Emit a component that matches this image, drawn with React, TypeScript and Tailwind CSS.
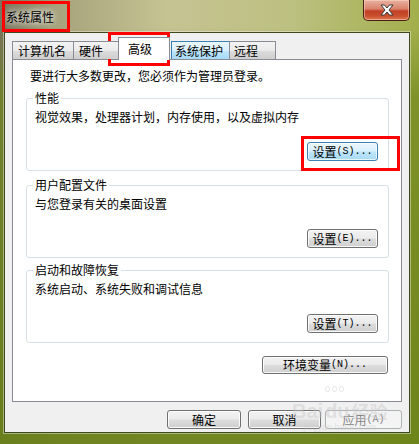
import React from "react";

const btnNormal =
  "flex items-center justify-center rounded-[3px] border border-[#707070] bg-[linear-gradient(180deg,#f2f2f2_0%,#ebebeb_48%,#dddddd_52%,#cfcfcf_100%)] shadow-[inset_0_0_0_1px_rgba(255,255,255,0.85)] text-black";

function Mono({ children }: { children: React.ReactNode }) {
  return <span className="[font-family:'Liberation_Mono',monospace] text-[10px]">{children}</span>;
}

function Group({
  title,
  desc,
  btn,
  className,
}: {
  title: string;
  desc: string;
  btn: React.ReactNode;
  className: string;
}) {
  return (
    <div
      className={
        "relative h-[73px] rounded-[3px] border border-[#d5dfe5] flex flex-col pl-[8px] pr-[10px] pt-[11px] pb-[9px] " +
        className
      }
    >
      <span className="absolute -top-[8px] left-[6px] bg-white px-[2px] leading-[14px]">{title}</span>
      <div className="leading-[14px]">{desc}</div>
      <div className="mt-auto self-end">{btn}</div>
    </div>
  );
}

export default function App() {
  return (
    <div className="relative w-[419px] h-[444px] overflow-hidden flex flex-col [font-family:'Noto_Sans_CJK_SC',sans-serif] text-[12px] leading-[14px] text-black bg-[linear-gradient(180deg,rgba(0,0,0,0)_0%,rgba(0,0,0,0)_6%,rgba(110,134,26,0.7)_22%,rgba(104,128,22,0.9)_100%),linear-gradient(90deg,#77725a_0%,#a7a37c_14%,#c6c393_40%,#bcc080_70%,#a3af4c_100%)]">
      {/* title bar */}
      <div className="h-[32px] flex items-start justify-between shrink-0">
        <div className="pl-[6px] pt-[10px] [text-shadow:0_0_6px_#fff,0_0_10px_rgba(255,255,255,0.9)]">系统属性</div>
        <div className="mr-[9px] w-[47px] h-[21px] rounded-b-[5px] border border-t-0 border-[#4a1e14] bg-[linear-gradient(180deg,#e8b2a2_0%,#d9826a_45%,#c23f25_55%,#c8502f_80%,#e07a52_100%)] shadow-[inset_0_0_0_1px_rgba(255,220,200,0.5)] flex items-center justify-center">
          <svg width="16" height="12" viewBox="0 0 16 12">
            <path d="M2 1 L5.5 1 L8 4 L10.5 1 L14 1 L10 6 L14 11 L10.5 11 L8 8 L5.5 11 L2 11 L6 6 Z" fill="#ffffff" stroke="#3a3a3a" strokeWidth="1" strokeLinejoin="round" />
          </svg>
        </div>
      </div>

      {/* client area */}
      <div className="ml-[4px] mr-[9px] mb-[11px] flex-1 bg-[#f0f0f0] border border-[#3e4a1e] shadow-[0_0_0_1px_rgba(255,255,255,0.4)] flex flex-col px-[7px] pt-[4px]">
        {/* tabs */}
        <div className="relative z-10 flex items-end h-[22px]">
          <div className="w-[62px] h-[18px] border border-b-0 border-[#898c95] bg-[linear-gradient(180deg,#f3f3f3_0%,#ebebeb_50%,#dcdcdc_51%,#cfcfcf_100%)] flex items-center pl-[5px]">计算机名</div>
          <div className="-ml-px w-[47px] h-[18px] border border-b-0 border-[#898c95] bg-[linear-gradient(180deg,#f3f3f3_0%,#ebebeb_50%,#dcdcdc_51%,#cfcfcf_100%)] flex items-center pl-[5px]">硬件</div>
          <div className="-ml-[2px] w-[52px] h-[23px] -mb-px border border-b-0 border-[#898c95] bg-white flex items-start pt-[4px] pl-[9px]">高级</div>
          <div className="ml-[1px] w-[59px] h-[18px] border border-b-0 border-[#3c7fb1] bg-[linear-gradient(180deg,#eaf6fd_0%,#d9f0fc_50%,#bee6fd_51%,#a7d9f5_100%)] flex items-center pl-[3px]">系统保护</div>
          <div className="-ml-px w-[47px] h-[18px] border border-b-0 border-[#898c95] bg-[linear-gradient(180deg,#f3f3f3_0%,#ebebeb_50%,#dcdcdc_51%,#cfcfcf_100%)] flex items-center pl-[4px]">远程</div>
        </div>

        {/* panel */}
        <div className="h-[343px] bg-white border border-[#898c95] flex flex-col pl-[13px] pr-[12px] pt-[9px]">
          <div className="ml-[4px] leading-[14px]">要进行大多数更改，您必须作为管理员登录。</div>

          <Group
            className="mt-[15px]"
            title="性能"
            desc="视觉效果，处理器计划，内存使用，以及虚拟内存"
            btn={
              <div className="w-[71px] h-[19px] flex items-center justify-center rounded-[3px] border border-[#3c7fb1] bg-[linear-gradient(180deg,#eaf6fd_0%,#d9f0fc_48%,#bee6fd_52%,#a7d9f5_100%)] shadow-[inset_0_0_0_1px_rgba(255,255,255,0.7)]">
                设置<Mono>(S)...</Mono>
              </div>
            }
          />

          <Group
            className="mt-[14px]"
            title="用户配置文件"
            desc="与您登录有关的桌面设置"
            btn={
              <div className={btnNormal + " w-[71px] h-[19px]"}>
                设置<Mono>(E)...</Mono>
              </div>
            }
          />

          <Group
            className="mt-[12px]"
            title="启动和故障恢复"
            desc="系统启动、系统失败和调试信息"
            btn={
              <div className={btnNormal + " w-[71px] h-[19px]"}>
                设置<Mono>(T)...</Mono>
              </div>
            }
          />

          <div className="mt-[13px] mr-[1px] self-end">
            <div className={btnNormal + " w-[126px] h-[18px]"}>
              环境变量<Mono>(N)...</Mono>
            </div>
          </div>
        </div>

        {/* bottom buttons */}
        <div className="mt-[8px] flex justify-end">
          <div className={btnNormal + " w-[74px] h-[19px]"}>确定</div>
          <div className={btnNormal + " ml-[7px] w-[73px] h-[19px]"}>取消</div>
          <div className="ml-[4px] w-[77px] h-[19px] flex items-center justify-center rounded-[3px] border border-[#adb2b5] bg-[#f4f4f4] text-[#838383]">
            应用<Mono>(A)</Mono>
          </div>
        </div>
      </div>

      {/* baidu watermark */}
      <div className="absolute left-[292px] top-[400px] flex flex-col items-center pointer-events-none text-[rgba(200,200,200,0.45)]">
        <div className="flex items-end gap-[2px] font-bold text-[20px] leading-[22px] [font-family:'Liberation_Sans',sans-serif]">
          <span>Bai</span>
          <span className="relative">
            <span className="absolute -top-[14px] left-[0px] flex gap-[2px]">
              <span className="w-[5px] h-[6px] rounded-full border border-[rgba(200,200,200,0.45)]" />
              <span className="w-[5px] h-[6px] rounded-full border border-[rgba(200,200,200,0.45)]" />
              <span className="w-[5px] h-[6px] rounded-full border border-[rgba(200,200,200,0.45)]" />
            </span>
            du
          </span>
          <span className="text-[18px] [font-family:'Noto_Sans_CJK_SC',sans-serif]">经验</span>
        </div>
        <div className="text-[9px] leading-[10px] [font-family:'Liberation_Sans',sans-serif]">jingyan.baidu.com</div>
      </div>

      {/* red annotation rectangles */}
      <div className="absolute left-[2px] top-[1px] w-[68px] h-[31px] border-[3px] border-[#ff0000] pointer-events-none" />
      <div className="absolute left-[108px] top-[32px] w-[62px] h-[34px] border-[3px] border-[#ff0000] pointer-events-none" />
      <div className="absolute left-[301px] top-[136px] w-[99px] h-[35px] border-[3px] border-[#ff0000] pointer-events-none" />
    </div>
  );
}
